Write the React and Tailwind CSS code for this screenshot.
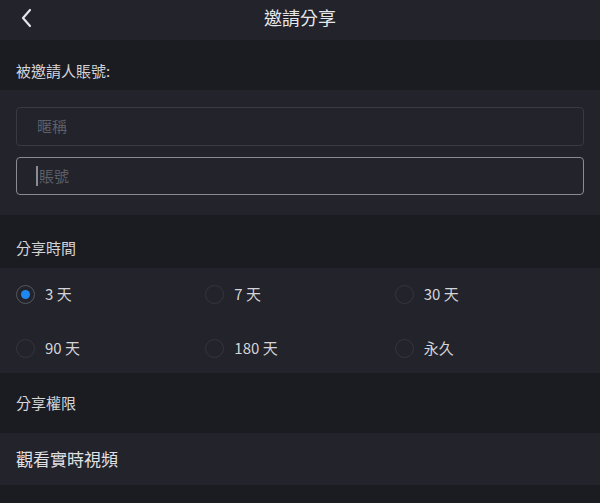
import React from "react";

const font = { fontFamily: '"Noto Sans CJK TC", "Noto Sans", sans-serif' };

function Radio({ checked, label }) {
  return (
    <div className="flex items-center gap-[10px]">
      <span
        className={
          "flex h-[19px] w-[19px] items-center justify-center rounded-full border-[1.5px] " +
          (checked ? "border-[#55565e]" : "border-[#34353d]")
        }
      >
        {checked && <span className="h-[9px] w-[9px] rounded-full bg-[#1e88f0]" />}
      </span>
      <span className="text-[15px] leading-5 text-[#d4d4d8]">{label}</span>
    </div>
  );
}

export default function App() {
  return (
    <div className="h-[503px] w-[600px] overflow-hidden bg-[#1b1c22]" style={font}>
      <div className="relative flex h-[40px] items-center justify-center bg-[#22232b]">
        <svg
          className="absolute left-[20px] top-[8px]"
          width="14"
          height="20"
          viewBox="0 0 14 20"
          fill="none"
          stroke="#e4e4e8"
          strokeWidth="2.2"
          strokeLinecap="round"
          strokeLinejoin="round"
        >
          <path d="M10 2 L3 10 L10 18" />
        </svg>
        <span className="text-[18px] leading-6 text-[#e6e6ea] -mt-[6px]">邀請分享</span>
      </div>

      <div className="h-[50px] bg-[#1b1c22] px-4 pt-[21px] text-[15px] leading-5 text-[#d4d4d8]">
        被邀請人賬號:
      </div>

      <div className="flex flex-col gap-[11px] bg-[#22232b] px-4 pt-[17px] pb-[20px]">
        <div className="flex h-[39px] items-center rounded-[4px] border border-[#393a43] pl-[20px] text-[15px] text-[#5e5f67]">
          暱稱
        </div>
        <div className="flex h-[38px] items-center rounded-[4px] border-[1.5px] border-[#8a8b93] pl-[19px] text-[15px] text-[#5e5f67]">
          <span className="mr-[1px] h-[20px] w-[2px] bg-[#8a8b93]" />
          賬號
        </div>
      </div>

      <div className="h-[53px] bg-[#1b1c22] px-4 pt-[23px] text-[15px] leading-5 text-[#d4d4d8]">
        分享時間
      </div>

      <div className="grid h-[105px] grid-cols-3 content-start gap-y-[34px] bg-[#22232b] px-4 pt-[16px]">
        <Radio checked label="3 天" />
        <Radio label="7 天" />
        <Radio label="30 天" />
        <Radio label="90 天" />
        <Radio label="180 天" />
        <Radio label="永久" />
      </div>

      <div className="h-[60px] bg-[#1b1c22] px-4 pt-[20px] text-[15px] leading-5 text-[#d4d4d8]">
        分享權限
      </div>

      <div className="flex h-[52px] items-center bg-[#22232b] px-4 text-[17px] text-[#e0e0e4]">
        觀看實時視頻
      </div>

      <div className="h-[18px] bg-[#1b1c22]" />
    </div>
  );
}
